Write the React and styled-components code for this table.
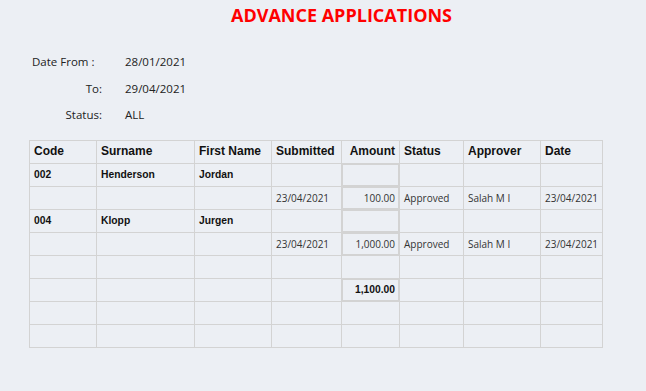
import styled, { createGlobalStyle } from "styled-components";

const GlobalStyle = createGlobalStyle`
  html, body {
    margin: 0;
    padding: 0;
    background: #eceff4;
  }
`;

const Page = styled.div`
  width: 646px;
  height: 391px;
  box-sizing: border-box;
  padding: 3px 0 0 29px;
  font-family: "Open Sans", "Noto Sans", sans-serif;
  color: #222;
`;

const Title = styled.h1`
  margin: 0;
  padding-left: 8px;
  text-align: center;
  font-size: 18px;
  line-height: 24px;
  font-weight: 700;
  color: #ff0000;
`;

const Filters = styled.div`
  display: grid;
  grid-template-columns: 70px auto;
  column-gap: 23px;
  margin: 22px 0 0 3px;
  font-size: 11.5px;
`;

const FilterLabel = styled.div`
  height: 26.5px;
  line-height: 26px;
  text-align: ${(p) => (p.$left ? "left" : "right")};
  white-space: nowrap;
`;

const FilterValue = styled.div`
  height: 26.5px;
  line-height: 26px;
`;

const Grid = styled.table`
  margin-top: 11px;
  width: 574px;
  table-layout: fixed;
  border-collapse: collapse;
  font-family: "Liberation Sans", Arial, sans-serif;
`;

const HeadCell = styled.th`
  height: 20px;
  padding: 0 4px 2px;
  border: 1px solid #d3d3d3;
  font-size: 12px;
  font-weight: 700;
  color: #111;
  text-align: ${(p) => (p.$right ? "right" : "left")};
  white-space: nowrap;
  overflow: hidden;
`;

const Cell = styled.td`
  height: 22px;
  padding: 0 4px;
  border: 1px solid #d3d3d3;
  font-family: ${(p) =>
    p.$bold ? `"Liberation Sans", Arial, sans-serif` : `"Open Sans", "Noto Sans", sans-serif`};
  font-size: ${(p) => (p.$bold ? "10.3px" : "10px")};
  font-weight: ${(p) => (p.$bold ? 700 : 400)};
  color: ${(p) => (p.$bold ? "#111" : "#333")};
  text-align: ${(p) => (p.$right ? "right" : "left")};
  white-space: nowrap;
  overflow: hidden;
  box-shadow: ${(p) => (p.$boxed ? "inset 0 0 0 1px #d3d3d3" : "none")};
`;

const widths = [67, 98, 77, 70, 58, 64, 77, 62];

const columns = [
  { key: "code", label: "Code" },
  { key: "surname", label: "Surname" },
  { key: "first", label: "First Name" },
  { key: "submitted", label: "Submitted" },
  { key: "amount", label: "Amount", right: true },
  { key: "status", label: "Status" },
  { key: "approver", label: "Approver" },
  { key: "date", label: "Date" },
];

const rows = [
  { type: "person", code: "002", surname: "Henderson", first: "Jordan" },
  {
    type: "line",
    submitted: "23/04/2021",
    amount: "100.00",
    status: "Approved",
    approver: "Salah M I",
    date: "23/04/2021",
  },
  { type: "person", code: "004", surname: "Klopp", first: "Jurgen" },
  {
    type: "line",
    submitted: "23/04/2021",
    amount: "1,000.00",
    status: "Approved",
    approver: "Salah M I",
    date: "23/04/2021",
  },
  { type: "blank" },
  { type: "total", amount: "1,100.00" },
  { type: "blank" },
  { type: "blank" },
];

function Row({ row }) {
  const boxed = row.type !== "blank";
  return (
    <tr>
      {columns.map((col) => {
        const isAmount = col.key === "amount";
        const bold = row.type === "person" || (row.type === "total" && isAmount);
        return (
          <Cell
            key={col.key}
            $bold={bold}
            $right={isAmount}
            $boxed={isAmount && boxed}
          >
            {row[col.key] || ""}
          </Cell>
        );
      })}
    </tr>
  );
}

export default function App() {
  return (
    <>
      <GlobalStyle />
      <Page>
        <Title>ADVANCE APPLICATIONS</Title>
        <Filters>
          <FilterLabel $left>Date From :</FilterLabel>
          <FilterValue>28/01/2021</FilterValue>
          <FilterLabel>To:</FilterLabel>
          <FilterValue>29/04/2021</FilterValue>
          <FilterLabel>Status:</FilterLabel>
          <FilterValue>ALL</FilterValue>
        </Filters>
        <Grid>
          <colgroup>
            {widths.map((w, i) => (
              <col key={i} style={{ width: w }} />
            ))}
          </colgroup>
          <thead>
            <tr>
              {columns.map((col) => (
                <HeadCell key={col.key} $right={col.right}>
                  {col.label}
                </HeadCell>
              ))}
            </tr>
          </thead>
          <tbody>
            {rows.map((row, i) => (
              <Row key={i} row={row} />
            ))}
          </tbody>
        </Grid>
      </Page>
    </>
  );
}
